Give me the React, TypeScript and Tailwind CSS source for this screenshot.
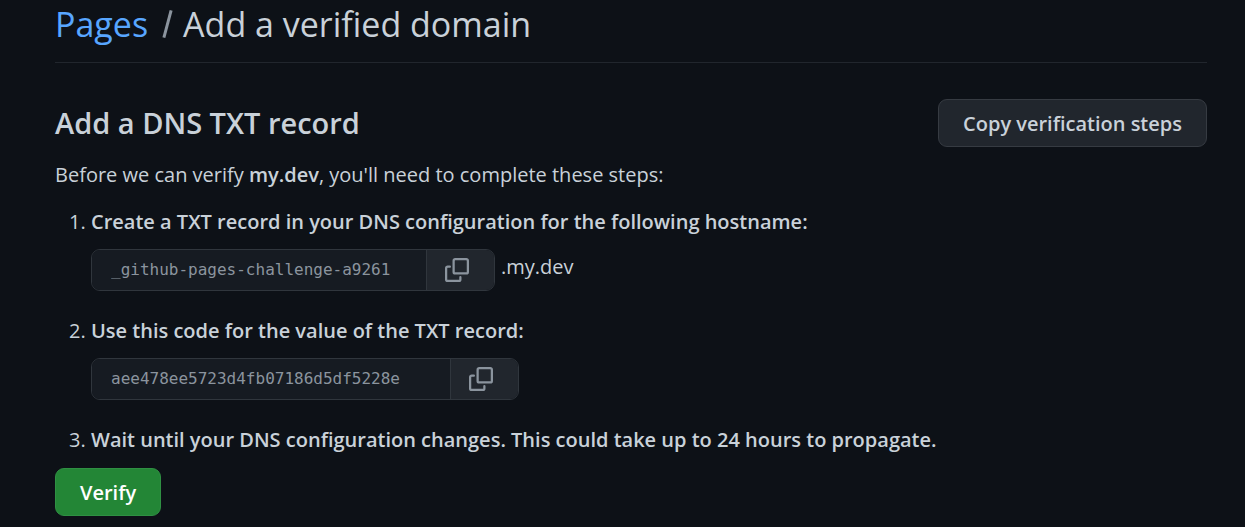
import { useId } from "react";

function CopyIcon() {
  return (
    <svg viewBox="0 0 16 16" className="size-6 fill-current" aria-hidden="true">
      <path d="M0 6.75C0 5.784.784 5 1.75 5h1.5a.75.75 0 0 1 0 1.5h-1.5a.25.25 0 0 0-.25.25v7.5c0 .138.112.25.25.25h7.5a.25.25 0 0 0 .25-.25v-1.5a.75.75 0 0 1 1.5 0v1.5A1.75 1.75 0 0 1 9.25 16h-7.5A1.75 1.75 0 0 1 0 14.25Z" />
      <path d="M5 1.75C5 .784 5.784 0 6.75 0h7.5C15.216 0 16 .784 16 1.75v7.5A1.75 1.75 0 0 1 14.25 11h-7.5A1.75 1.75 0 0 1 5 9.25Zm1.75-.25a.25.25 0 0 0-.25.25v7.5c0 .138.112.25.25.25h7.5a.25.25 0 0 0 .25-.25v-7.5a.25.25 0 0 0-.25-.25Z" />
    </svg>
  );
}

type CopyStepProps = {
  title: string;
  value: string;
  inputWidth: string;
  suffix?: string;
};

function CopyStep({ title, value, inputWidth, suffix }: CopyStepProps) {
  const id = useId();
  return (
    <li className="mb-6">
      <label htmlFor={id} className="block font-semibold">
        {title}
      </label>
      <div className="mt-[11px] flex items-start gap-1.5">
        <div className="flex h-[42px] overflow-hidden rounded-[9px] border border-[#30363d]">
          <input
            id={id}
            readOnly
            value={value}
            className={`${inputWidth} bg-[#161b22] pl-[19px] font-['DejaVu_Sans_Mono',monospace] text-base text-[#8b949e] outline-none`}
          />
          <button
            type="button"
            aria-label="Copy"
            className="flex w-[68px] items-center border-l border-[#30363d] bg-[#21262d] pl-[18px] text-[#8b949e]"
          >
            <CopyIcon />
          </button>
        </div>
        {suffix && <span className="leading-9">{suffix}</span>}
      </div>
    </li>
  );
}

export default function App() {
  return (
    <main className="min-h-screen bg-[#0d1117] pr-[38px] pb-2 pl-[55px] font-['Open_Sans','Noto_Sans',sans-serif] text-xl leading-8 text-[#c9d1d9]">
      <h1 className="flex items-center border-b border-[#21262d] pb-3.5 text-[34px] leading-12">
        <a href="#pages" className="text-[#58a6ff]">
          Pages
        </a>
        <span className="mr-3.5 ml-[18px] h-7 rotate-15 border-r-3 border-[#8b949e]" aria-hidden="true" />
        Add a verified domain
      </h1>

      <div className="mt-9 flex items-center justify-between">
        <h2 className="text-[29px] font-semibold">Add a DNS TXT record</h2>
        <button
          type="button"
          className="h-12 rounded-[9px] border border-[#363b42] bg-[#21262d] px-6 pt-0.5 font-semibold"
        >
          Copy verification steps
        </button>
      </div>

      <p className="mt-3">
        Before we can verify <strong className="font-semibold">my.dev</strong>, you'll need to
        complete these steps:
      </p>

      <ol className="mt-[15px] list-decimal pl-9">
        <CopyStep
          title="Create a TXT record in your DNS configuration for the following hostname:"
          value="_github-pages-challenge-a9261"
          inputWidth="w-[334px]"
          suffix=".my.dev"
        />
        <CopyStep
          title="Use this code for the value of the TXT record:"
          value="aee478ee5723d4fb07186d5df5228e"
          inputWidth="w-[358px]"
        />
        <li>
          <span className="font-semibold">
            Wait until your DNS configuration changes. This could take up to 24 hours to propagate.
          </span>
        </li>
      </ol>

      <button
        type="button"
        className="mt-3 h-12 rounded-[9px] border border-[#2f9043] bg-[#238636] px-6 pt-0.5 font-semibold text-white"
      >
        Verify
      </button>
    </main>
  );
}
